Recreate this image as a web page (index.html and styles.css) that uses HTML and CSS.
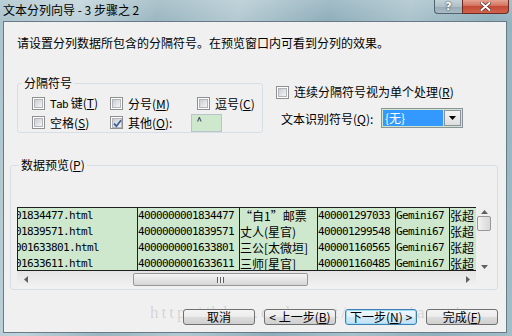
FILE: index.html
```html
<!DOCTYPE html>
<html lang="zh-CN">
<head>
    <meta charset="UTF-8">
    <title>文本分列向导 - 3 步骤之 2</title>
    <link rel="stylesheet" href="styles.css">
</head>
<body>
<div class="window">
    <div class="titlebar">
        <span class="title">文本分列向导 - 3 步骤之 2</span>
        <div class="caption-btns">
            <div class="cap help">?</div>
            <div class="cap close">
                <svg width="11" height="9" viewBox="0 0 11 9">
                    <path d="M1.5 1 L9.5 8 M9.5 1 L1.5 8" stroke="#5a2a22" stroke-width="3.4" stroke-linecap="round"/>
                    <path d="M1.5 1 L9.5 8 M9.5 1 L1.5 8" stroke="#fff" stroke-width="2" stroke-linecap="round"/>
                </svg>
            </div>
        </div>
    </div>

    <div class="client">
        <p class="intro">请设置分列数据所包含的分隔符号。在预览窗口内可看到分列的效果。</p>

        <div class="options">
            <fieldset class="group delims">
                <legend>分隔符号</legend>
                <div class="delim-grid">
                    <label class="chk"><span class="box"></span><span><span class="mono">Tab</span> 键(<u>T</u>)</span></label>
                    <label class="chk"><span class="box"></span><span>分号(<u>M</u>)</span></label>
                    <label class="chk"><span class="box"></span><span>逗号(<u>C</u>)</span></label>
                    <label class="chk"><span class="box"></span><span>空格(<u>S</u>)</span></label>
                    <label class="chk other">
                        <span class="box checked">
                            <svg width="9" height="9" viewBox="0 0 9 9"><path d="M1 4.6 L3.4 7.2 L8 1.3" fill="none" stroke="#3a5a98" stroke-width="1.7"/></svg>
                        </span>
                        <span>其他(<u>O</u>):</span>
                        <span class="other-input">^</span>
                    </label>
                </div>
            </fieldset>

            <div class="side">
                <label class="chk"><span class="box"></span><span>连续分隔符号视为单个处理(<u>R</u>)</span></label>
                <div class="qualifier">
                    <span class="q-label">文本识别符号(<u>Q</u>):</span>
                    <div class="combo">
                        <span class="sel">{无}</span>
                        <span class="drop">
                            <svg width="7" height="4" viewBox="0 0 7 4"><path d="M0 0 H7 L3.5 4 Z" fill="#000"/></svg>
                        </span>
                    </div>
                </div>
            </div>
        </div>

        <fieldset class="group preview">
            <legend>数据预览(<u>P</u>)</legend>
            <div class="grid-view">
                <div class="cells">
                    <table>
                        <colgroup>
                            <col style="width:120px"><col style="width:102px"><col style="width:78px">
                            <col style="width:78px"><col style="width:54px"><col style="width:40px">
                        </colgroup>
                        <tr>
                            <td class="mono first">01834477.html</td><td class="mono">4000000001834477</td><td>“自1”邮票</td>
                            <td class="mono">400001297033</td><td class="mono">Gemini67</td><td>张超</td>
                        </tr>
                        <tr>
                            <td class="mono first">01839571.html</td><td class="mono">4000000001839571</td><td>丈人(星官)</td>
                            <td class="mono">400001299548</td><td class="mono">Gemini67</td><td>张超</td>
                        </tr>
                        <tr>
                            <td class="mono first">001633801.html</td><td class="mono">4000000001633801</td><td>三公[太微垣]</td>
                            <td class="mono">400001160565</td><td class="mono">Gemini67</td><td>张超</td>
                        </tr>
                        <tr>
                            <td class="mono first">01633611.html</td><td class="mono">4000000001633611</td><td>三师[星官]</td>
                            <td class="mono">400001160485</td><td class="mono">Gemini67</td><td>张超</td>
                        </tr>
                    </table>
                </div>
                <div class="vscroll">
                    <span class="arrow"><svg width="7" height="4" viewBox="0 0 7 4"><path d="M0 4 H7 L3.5 0 Z" fill="#606060"/></svg></span>
                    <span class="vthumb"></span>
                    <span class="vtrack"></span>
                    <span class="arrow"><svg width="7" height="4" viewBox="0 0 7 4"><path d="M0 0 H7 L3.5 4 Z" fill="#606060"/></svg></span>
                </div>
            </div>
            <div class="hscroll-row">
                <div class="hscroll">
                    <span class="harrow"><svg width="4" height="7" viewBox="0 0 4 7"><path d="M4 0 V7 L0 3.5 Z" fill="#606060"/></svg></span>
                    <span class="hthumb"><span class="grip"></span></span>
                    <span class="htrack"></span>
                    <span class="harrow"><svg width="4" height="7" viewBox="0 0 4 7"><path d="M0 0 V7 L4 3.5 Z" fill="#606060"/></svg></span>
                </div>
                <div class="corner"></div>
            </div>
        </fieldset>

        <div class="buttons">
            <button class="btn">取消</button>
            <button class="btn">&lt; 上一步(<u>B</u>)</button>
            <button class="btn default">下一步(<u>N</u>) &gt;</button>
            <button class="btn">完成(<u>F</u>)</button>
        </div>
    </div>

    <div class="watermark">http://blog.csdn.net/wangxiaoming</div>
</div>
</body>
</html>
```

FILE: styles.css
```css
* {
    box-sizing: border-box;
}
html, body {
    margin: 0;
}
body {
    width: 512px;
    height: 336px;
    overflow: hidden;
    font-family: "Noto Sans CJK SC", sans-serif;
    font-size: 12px;
    color: #000;
    background:
        linear-gradient(180deg, rgba(255,255,255,0.18), rgba(255,255,255,0) 22px),
        linear-gradient(100deg, #aac3cc 0%, #bfd3da 14%, #9ab6c1 28%, #b3c9d1 42%, #8eaebb 58%, #a9c2cb 72%, #8fb0bd 86%, #a2bec8 100%);
}
.window {
    position: relative;
    height: 336px;
    display: flex;
    flex-direction: column;
}

/* title bar */
.titlebar {
    height: 21px;
    display: flex;
    justify-content: space-between;
    align-items: flex-start;
}
.title {
    padding: 2px 0 0 3px;
    line-height: 16px;
}
.caption-btns {
    display: flex;
    margin-right: 3px;
}
.cap {
    height: 14px;
    display: flex;
    align-items: center;
    justify-content: center;
    border: 1px solid #4f6470;
    border-top: none;
}
.help {
    width: 28px;
    border-radius: 0 0 0 4px;
    border-right: none;
    background: linear-gradient(180deg, #c4d3da 0%, #aebfc8 50%, #98aab4 51%, #a9bcc5 100%);
    color: #fff;
    font-family: "DejaVu Sans", sans-serif;
    font-weight: bold;
    font-size: 11px;
    line-height: 12px;
    text-shadow: 0 0 2px #3a4a55, 0 0 1px #3a4a55;
}
.close {
    width: 47px;
    border-radius: 0 0 4px 0;
    border-color: #6b2a22;
    background: linear-gradient(180deg, #e5a393 0%, #d4705e 45%, #c44a36 50%, #d0634c 100%);
}

/* client area */
.client {
    flex: 1;
    margin: 0 5px 3px 3px;
    border: 1px solid #687a88;
    background: #f0f0f0;
    padding: 13px 8px 0 6px;
}
.intro {
    margin: 0 0 0 7px;
    line-height: 16px;
}
u {
    text-decoration: underline;
    text-underline-offset: 1px;
}
.mono {
    font-family: "DejaVu Sans Mono", monospace;
    font-size: 11px;
    letter-spacing: -0.62px;
}

.options {
    display: flex;
    align-items: flex-start;
    margin: 25px 0 0 7px;
}
.group {
    margin: 0;
    padding: 0;
    min-width: 0;
    border: 1px solid #d5dfe5;
    border-radius: 3px;
}
.group legend {
    padding: 0 2px;
    line-height: 14px;
}
.delims {
    width: 246px;
}
.delims legend {
    margin-left: 4px;
}
.delim-grid {
    display: grid;
    grid-template-columns: 78px 87px auto;
    grid-auto-rows: 19px;
    align-items: center;
    padding: 4px 0 0 14px;
}
.chk {
    display: flex;
    align-items: center;
    gap: 5px;
    line-height: 16px;
    white-space: nowrap;
}
.box {
    width: 13px;
    height: 13px;
    border: 1px solid #8f8f8f;
    background: #fff;
    padding: 1px;
    display: grid;
    flex: none;
}
.box::before {
    content: "";
    grid-area: 1 / 1;
    border: 1px solid #b1b5bb;
    background: linear-gradient(135deg, #c9cdd3, #f4f4f4);
}
.box svg {
    grid-area: 1 / 1;
    margin: 1px 0 0 1px;
    position: relative;
}
.other {
    grid-column: span 2;
}
.other-input {
    width: 31px;
    height: 18px;
    margin-left: 14px;
    border: 1px solid #b9c3c9;
    background: #cde8cd;
    font-size: 10px;
    line-height: 10px;
    padding: 1px 0 0 4px;
}

.side {
    margin-left: 13px;
    padding-top: 8px;
}
.qualifier {
    display: flex;
    align-items: center;
    margin: 8px 0 0 5px;
}
.q-label {
    width: 100px;
}
.combo {
    width: 82px;
    height: 20px;
    border: 1px solid #8c9299;
    background: #cde8cd;
    display: flex;
    padding: 1px;
}
.sel {
    flex: 1;
    background: #3399ff;
    color: #fff;
    line-height: 16px;
    padding-left: 2px;
    margin-right: 1px;
}
.drop {
    width: 17px;
    border: 1px solid #8c9299;
    background: linear-gradient(180deg, #f4f4f4, #dedede);
    display: flex;
    align-items: center;
    justify-content: center;
}

/* data preview */
.preview {
    margin-top: 25px;
    padding: 35px 0 1px 6px;
}
.preview legend {
    margin-left: 2px;
}
.grid-view {
    display: flex;
}
.cells {
    width: 459px;
    height: 64px;
    overflow: hidden;
    border: 1px solid #1e1e1e;
    border-right: none;
}
.cells table {
    table-layout: fixed;
    width: 472px;
    border-collapse: separate;
    border-spacing: 0;
}
.cells td {
    height: 16px;
    line-height: 16px;
    padding: 0;
    background: #cde8cd;
    border-right: 1px solid #1e1e1e;
    white-space: nowrap;
    overflow: hidden;
}
.cells td.first {
    text-indent: -3px;
}
.vscroll {
    width: 16px;
    height: 64px;
    display: flex;
    flex-direction: column;
    align-items: center;
    background: #efefef;
}
.arrow {
    height: 9px;
    display: flex;
    align-items: center;
}
.vthumb {
    width: 14px;
    height: 15px;
    border: 1px solid #979797;
    border-radius: 2px;
    background: linear-gradient(90deg, #f4f4f4, #e4e4e4 50%, #d8d8d8);
}
.vtrack {
    flex: 1;
}
.hscroll-row {
    display: flex;
}
.hscroll {
    width: 459px;
    height: 17px;
    display: flex;
    align-items: center;
    background: linear-gradient(180deg, #e4e4e4, #f2f2f2);
}
.harrow {
    width: 17px;
    display: flex;
    justify-content: center;
}
.hthumb {
    width: 175px;
    height: 13px;
    margin-left: 99px;
    border: 1px solid #979797;
    border-radius: 2px;
    background: linear-gradient(180deg, #f4f4f4, #e6e6e6 50%, #d6d6d6);
    display: flex;
    align-items: center;
    justify-content: center;
}
.grip {
    width: 7px;
    height: 6px;
    background: repeating-linear-gradient(90deg, #5d5d5d 0 1px, #f0f0f0 1px 3px);
}
.htrack {
    flex: 1;
}
.corner {
    width: 16px;
}

/* buttons */
.buttons {
    display: flex;
    justify-content: flex-end;
    gap: 9px;
    margin-top: 19px;
}
.btn {
    position: relative;
    z-index: 1;
    width: 72px;
    height: 16px;
    padding: 0;
    border: 1px solid #707070;
    border-radius: 3px;
    background: linear-gradient(180deg, #f4f4f4 0%, #ebebeb 50%, #dddddd 51%, #cfcfcf 100%);
    font-family: "Noto Sans CJK SC", sans-serif;
    font-size: 12px;
    line-height: 14px;
    color: #000;
}
.btn.default {
    border-color: #3c7fb1;
    box-shadow: inset 0 0 0 1px #9fdcf6;
    background: linear-gradient(180deg, #eef7fc 0%, #e2f1fa 50%, #d2e9f6 51%, #c4e2f3 100%);
}

.watermark {
    position: absolute;
    left: 150px;
    top: 303px;
    font-family: "Liberation Serif", serif;
    font-size: 17px;
    letter-spacing: 3px;
    color: rgba(110, 110, 110, 0.22);
    white-space: nowrap;
}
```
